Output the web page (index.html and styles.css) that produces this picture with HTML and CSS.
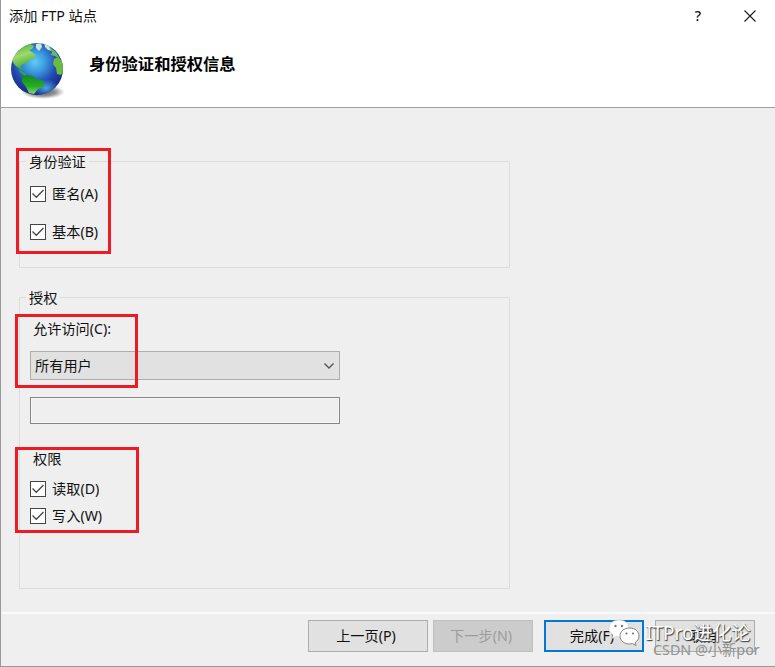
FILE: index.html
```html
<!DOCTYPE html>
<html lang="zh-CN">
<head>
<meta charset="utf-8">
<title>添加 FTP 站点</title>
<link rel="stylesheet" href="styles.css">
</head>
<body>
<main class="dialog">
  <header class="header">
    <div class="titlebar">
      <span class="title">添加 FTP 站点</span>
      <span class="help">?</span>
      <svg class="close" width="12" height="12" viewBox="0 0 12 12"><path d="M.5.5l11 11M11.5.5l-11 11" stroke="#222" stroke-width="1.2" fill="none"/></svg>
    </div>
    <div class="banner">
      <svg class="globe" width="56" height="58" viewBox="0 0 56 58">
        <defs>
          <radialGradient id="sea" cx=".46" cy=".36" r=".62">
            <stop offset="0" stop-color="#62cdf2"/><stop offset=".32" stop-color="#3a9be0"/><stop offset=".68" stop-color="#2449b0"/><stop offset="1" stop-color="#182b86"/>
          </radialGradient>
          <radialGradient id="shine" cx=".5" cy=".5" r=".5"><stop offset="0" stop-color="#53c4ee" stop-opacity=".8"/><stop offset="1" stop-color="#53c4ee" stop-opacity="0"/></radialGradient>
          <radialGradient id="shade"><stop offset="0" stop-color="#444" stop-opacity=".9"/><stop offset=".6" stop-color="#555" stop-opacity=".6"/><stop offset="1" stop-color="#777" stop-opacity="0"/></radialGradient>
          <linearGradient id="land" x1="0" y1="0" x2=".3" y2="1"><stop offset="0" stop-color="#39a936"/><stop offset=".5" stop-color="#a2d96a"/><stop offset="1" stop-color="#40a83c"/></linearGradient>
          <linearGradient id="south" x1="0" y1="0" x2="0" y2="1"><stop offset="0" stop-color="#0f8a20"/><stop offset=".6" stop-color="#28ad25"/><stop offset="1" stop-color="#8bd878"/></linearGradient>
          <clipPath id="disc"><circle cx="27" cy="27" r="26"/></clipPath>
        </defs>
        <ellipse cx="33" cy="50" rx="22" ry="7" fill="url(#shade)"/>
        <circle cx="27" cy="27" r="26" fill="url(#sea)"/>
        <g clip-path="url(#disc)">
          <ellipse cx="36" cy="46" rx="13" ry="9" fill="url(#shine)"/>
          <path d="M2 18C4 9 11 3 20 2l4 2-2 3-3 1 4 3 3 2-1 3-4 1-4 4-4 1-3 3 4 2-2 1-5-3-3-3z" fill="url(#land)"/>
          <path d="M26 2l5-1 1 4-3 4-3-3zM34 1l5 3 4 5-5-1-3-3z" fill="#c9e8d2"/>
          <path d="M39 5l7 5 4 7-5-3-4-1 1-3z" fill="#64b96b"/>
          <path d="M44 17l4-2 4 4 2 9-3 5-4-1-1-6-3-4z" fill="#67bd3d"/>
          <path d="M12 34l5-1 6 1 3 3 8 2-1 6-5 2-4 5-5-1-3-6-4-5z" fill="url(#south)"/>
          <path d="M9 27l7 5-1 2-5-4z" fill="#35a54c"/>
        </g>
      </svg>
      <h1>身份验证和授权信息</h1>
    </div>
  </header>

  <section class="content">
    <div class="group auth">
      <span class="legend">身份验证</span>
      <div class="mark mark-auth"></div>
      <label class="check"><svg class="box" viewBox="0 0 14 14"><path d="M1.500 6.500l3.800 3.800L12.500 3"/></svg>匿名(A)</label>
      <label class="check"><svg class="box" viewBox="0 0 14 14"><path d="M1.500 6.500l3.800 3.800L12.500 3"/></svg>基本(B)</label>
    </div>
    <div class="group access">
      <span class="legend">授权</span>
      <div class="mark mark-access"></div>
      <div class="mark mark-rights"></div>
      <div class="caption">允许访问(C):</div>
      <div class="select"><span>所有用户</span><svg width="12" height="8" viewBox="0 0 12 8"><path d="M1.500 1.500l4.500 4.500 4.500-4.500" fill="none" stroke="#555" stroke-width="1.400"/></svg></div>
      <div class="field"></div>
      <div class="caption rights">权限</div>
      <label class="check"><svg class="box" viewBox="0 0 14 14"><path d="M1.500 6.500l3.800 3.800L12.500 3"/></svg>读取(D)</label>
      <label class="check"><svg class="box" viewBox="0 0 14 14"><path d="M1.500 6.500l3.800 3.800L12.500 3"/></svg>写入(W)</label>
    </div>
  </section>

  <footer class="footer">
    <div class="btn previous">上一页(P)</div>
    <div class="btn disabled">下一步(N)</div>
    <div class="btn primary">完成(F)</div>
    <div class="btn cancel">取消</div>
  </footer>

  <div class="watermark">
    <svg class="wechat" width="32" height="28" viewBox="0 0 32 28">
      <path d="M11 1C5 1 1 4.500 1 9.500c0 3 1.500 5 4 6.500l-1 3.500 4-2 3 .5c6 0 10-3.500 10-8.500S17 1 11 1z" fill="#fff" stroke="#ccc" stroke-width=".6"/>
      <path d="M21.500 9C16 9 12 12.500 12 17s4 8 9.500 8l3-.5 3.500 2-1-3c2.500-1.500 4-3.500 4-6.500 0-4.500-4-8-9.500-8z" fill="#fff" stroke="#777" stroke-width=".9"/>
      <g fill="#777"><circle cx="7.500" cy="7" r="1.200"/><circle cx="14" cy="7" r="1.200"/><circle cx="18.500" cy="14.500" r="1.100"/><circle cx="25" cy="14.500" r="1.100"/></g>
    </svg>
    <span class="brand">ITPro进化论</span>
    <span class="credit">CSDN @小新por</span>
  </div>
</main>
</body>
</html>
```
FILE: styles.css
```css
* { box-sizing: border-box; }
body { margin: 0; font: 14.2px/20px "Noto Sans", "Noto Sans CJK SC", sans-serif; color: #111; }
.dialog { position: relative; width: 775px; height: 667px; display: flex; flex-direction: column; overflow: hidden; background: #efefef; border-left: 1px solid #999; border-bottom: 1px solid #999; }
.header { height: 108px; background: #fff; border-bottom: 1px solid #a0a0a0; }
.titlebar { display: flex; align-items: center; height: 32px; padding: 0 19px 0 8px; }
.title { flex: 1; }
.help { margin-right: 43px; font-weight: 500; }
.banner { display: flex; align-items: flex-start; padding: 10px 0 0 9px; }
h1 { margin: 12px 0 0 23px; font-size: 16.3px; line-height: 20px; font-weight: 700; color: #000; }
.content { flex: 1; padding: 53px 0 0 18px; }
.group { position: relative; width: 491px; border: 1px solid #dcdcdc; padding-left: 10px; }
.auth { height: 107px; padding-top: 22px; margin-bottom: 29px; }
.access { height: 292px; padding-top: 21px; }
.legend { position: absolute; top: -10px; left: 6px; padding: 0 3px; background: #efefef; }
.check { display: flex; align-items: center; gap: 6px; height: 20px; }
.auth .check { margin-bottom: 18px; }
.access .check { margin-bottom: 7px; }
.box { width: 16px; height: 16px; background: #fff; border: 1px solid #444; fill: none; stroke: #444; stroke-width: 1.3; }
.caption { padding-left: 3px; }
.select { display: flex; align-items: center; justify-content: space-between; width: 310px; height: 29px; margin-top: 12px; padding: 0 4px; background: #e1e1e1; border: 1px solid #adadad; }
.field { width: 310px; height: 27px; margin-top: 17px; border: 1px solid #868686; box-shadow: inset 0 0 0 1px #f8f8f8; }
.rights { margin: 25px 0 10px; }
.mark { position: absolute; z-index: 1; border: 3px solid #ed1c24; }
.mark-auth { left: -4px; top: -14px; width: 95px; height: 106px; }
.mark-access { left: -5px; top: 16px; width: 123px; height: 74px; }
.mark-rights { left: -5px; top: 149px; width: 124px; height: 86px; }
.footer { display: flex; height: 54px; padding: 6px 20px 0 0; justify-content: flex-end; border-top: 2px solid #fafafa; }
.btn { display: flex; align-items: center; justify-content: center; width: 100px; height: 32px; padding-right: 4px; background: #e1e1e1; border: 1px solid #adadad; }
.previous { width: 120px; margin-right: 5px; }
.disabled { margin-right: 11px; background: #ccc; border-color: #bfbfbf; color: #9c9c9c; }
.primary { margin-right: 11px; border: 2px solid #0078d7; }
.watermark { position: absolute; left: 607px; top: 619px; width: 165px; height: 44px; }
.wechat { position: absolute; left: 0; top: 0; }
.brand { position: absolute; left: 38px; top: 2px; font-size: 19px; line-height: 24px; color: #fff; white-space: nowrap; text-shadow: 1px 1px 1px #444, 0 1px 1px #777; }
.credit { position: absolute; left: 45px; top: 21px; font-size: 14.3px; line-height: 20px; color: #929292; white-space: nowrap; }
```
